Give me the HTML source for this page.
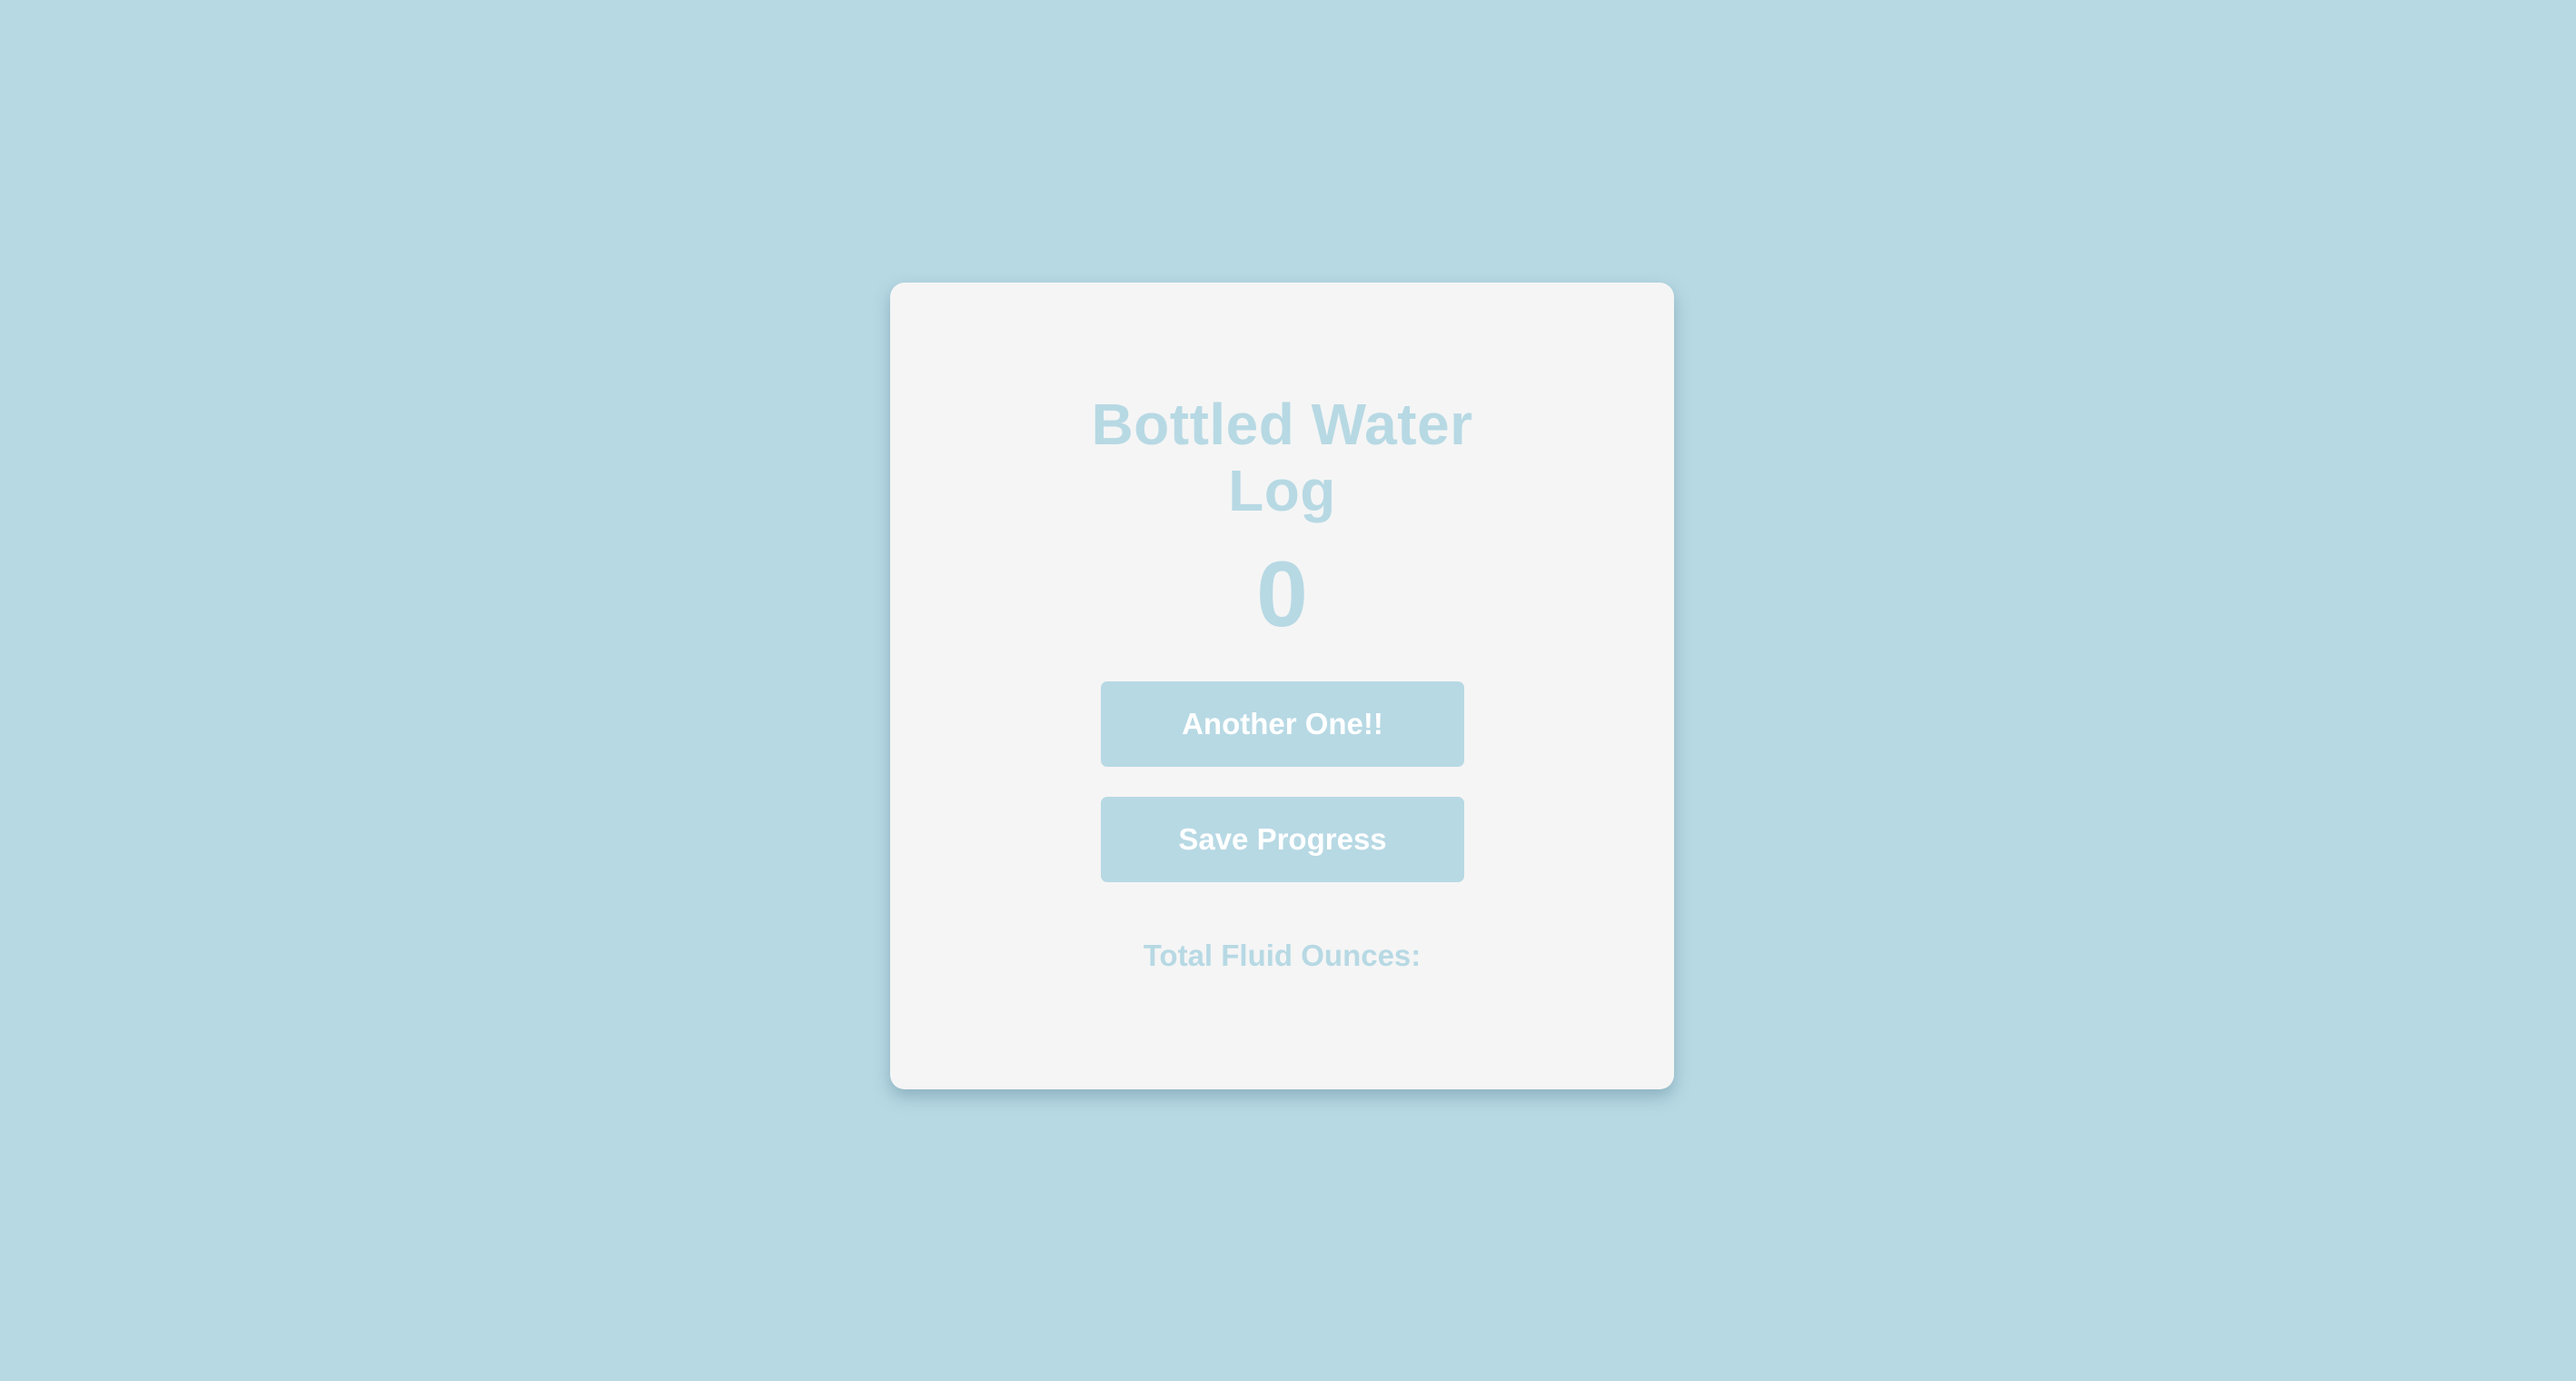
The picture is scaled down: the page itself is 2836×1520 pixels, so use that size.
<!DOCTYPE html>
<html><head><style>
html,body{margin:0;padding:0}
body{width:2836px;height:1520px;background:#b7d9e4;position:relative;font-family:"Liberation Sans",sans-serif;overflow:hidden}
.card{position:absolute;left:980px;top:311px;width:863px;height:888px;background:#f5f5f5;border-radius:16px;box-shadow:0 8px 18px rgba(60,100,120,0.35)}
.t{position:absolute;left:0;width:100%;text-align:center;color:#b7d9e4;font-weight:bold}
.title{top:120px;font-size:64px;line-height:73px;letter-spacing:0.5px}
.zero{top:288px;font-size:102px;line-height:110px}
.btn{position:absolute;left:232px;width:400px;height:94px;background:#b7d9e4;border-radius:7px;color:#fff;font-weight:bold;font-size:33px;line-height:94px;text-align:center}
.tot{font-size:33px;line-height:40px;top:721px}
</style></head><body>
<div class="card">
<div class="t title">Bottled Water<br>Log</div>
<div class="t zero">0</div>
<div class="btn" style="top:439px">Another One!!</div>
<div class="btn" style="top:566px">Save Progress</div>
<div class="t tot">Total Fluid Ounces:</div>
</div>
</body></html>
